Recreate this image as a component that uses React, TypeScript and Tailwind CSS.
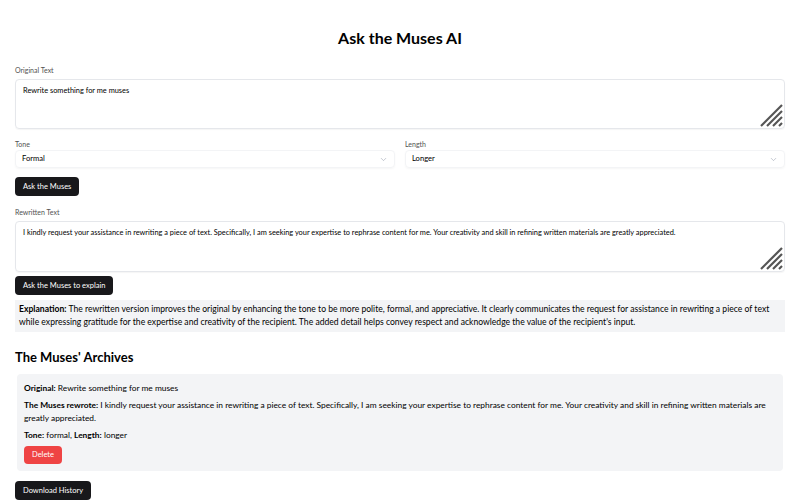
import React, { useState } from "react";
import { ChevronDown } from "lucide-react";

const rewritten =
  "I kindly request your assistance in rewriting a piece of text. Specifically, I am seeking your expertise to rephrase content for me. Your creativity and skill in refining written materials are greatly appreciated.";

const Grip = () => (
  <svg
    className="absolute right-[2px] bottom-[2px] pointer-events-none"
    width="24"
    height="24"
    viewBox="0 0 24 24"
  >
    <g stroke="#555" strokeWidth="2.2" strokeLinecap="butt">
      <line x1="23" y1="2" x2="2" y2="23" />
      <line x1="23" y1="8" x2="8" y2="23" />
      <line x1="23" y1="14" x2="14" y2="23" />
      <line x1="23" y1="20" x2="20" y2="23" />
    </g>
  </svg>
);

const Field = ({ label, value, h }: { label: string; value: string; h: string }) => (
  <div>
    <div className="text-[7px] leading-[10px] text-neutral-600 mb-[4px]">{label}</div>
    <div className="relative">
      <textarea
        readOnly
        value={value}
        className={`block w-full ${h} resize-none rounded-[4px] border border-gray-200 shadow-[0_1px_1px_rgba(0,0,0,0.04)] px-[7px] py-[5px] text-[7.4px] leading-[12px] text-black outline-none`}
      />
      <Grip />
    </div>
  </div>
);

const Select = ({ label, value }: { label: string; value: string }) => (
  <div className="flex-1">
    <div className="text-[7px] leading-[10px] text-neutral-600 mb-[1px]">{label}</div>
    <div className="flex items-center justify-between h-[18px] rounded-[4px] border border-gray-100 shadow-[0_1px_2px_rgba(0,0,0,0.04)] px-[6px] text-[7.6px] text-black">
      <span>{value}</span>
      <ChevronDown size={9} className="text-gray-400" strokeWidth={1.5} />
    </div>
  </div>
);

const DarkButton = ({ children }: { children: React.ReactNode }) => (
  <button className="h-[19px] px-[8px] rounded-[4px] bg-[#18181b] text-white text-[7.5px] leading-none">
    {children}
  </button>
);

export default function App() {
  const [history, setHistory] = useState([1]);

  return (
    <div
      className="bg-white px-[15px] pt-[28px] pb-[10px] text-black"
      style={{ fontFamily: "Lato, 'Noto Sans', sans-serif" }}
    >
      <h1 className="text-center text-[16px] leading-[20px] font-bold mb-[17px]">
        Ask the Muses AI
      </h1>

      <Field label="Original Text" value="Rewrite something for me muses" h="h-[50px]" />

      <div className="flex gap-[10px] mt-[10px]">
        <Select label="Tone" value="Formal" />
        <Select label="Length" value="Longer" />
      </div>

      <div className="flex mt-[9px]">
        <DarkButton>Ask the Muses</DarkButton>
      </div>

      <div className="mt-[11px]">
        <Field label="Rewritten Text" value={rewritten} h="h-[51px]" />
      </div>

      <div className="flex mt-[4px]">
        <DarkButton>Ask the Muses to explain</DarkButton>
      </div>

      <div className="mt-[5px] bg-gray-100 px-[4px] py-[3px] text-[8.6px] leading-[13px]">
        <span className="font-bold">Explanation:</span> The rewritten version improves the
        original by enhancing the tone to be more polite, formal, and appreciative. It clearly
        communicates the request for assistance in rewriting a piece of text while expressing
        gratitude for the expertise and creativity of the recipient. The added detail helps convey
        respect and acknowledge the value of the recipient's input.
      </div>

      <h2 className="mt-[16px] text-[13px] leading-[18px] font-bold">The Muses' Archives</h2>

      {history.map((id) => (
        <div
          key={id}
          className="mt-[8px] mx-[2px] bg-gray-100 rounded-[4px] px-[7px] pt-[8px] pb-[7px] text-[8.4px] leading-[13px]"
        >
          <p className="mb-[4px]">
            <span className="font-bold">Original:</span> Rewrite something for me muses
          </p>
          <p className="mb-[4px]">
            <span className="font-bold">The Muses rewrote:</span> {rewritten}
          </p>
          <p className="mb-[4px]">
            <span className="font-bold">Tone:</span> formal, <span className="font-bold">Length:</span>{" "}
            longer
          </p>
          <div className="flex">
            <button
              onClick={() => setHistory([])}
              className="h-[18px] px-[8px] rounded-[4px] bg-[#ef4444] text-white text-[7.5px] leading-none"
            >
              Delete
            </button>
          </div>
        </div>
      ))}

      <div className="flex mt-[10px]">
        <DarkButton>Download History</DarkButton>
      </div>
    </div>
  );
}
